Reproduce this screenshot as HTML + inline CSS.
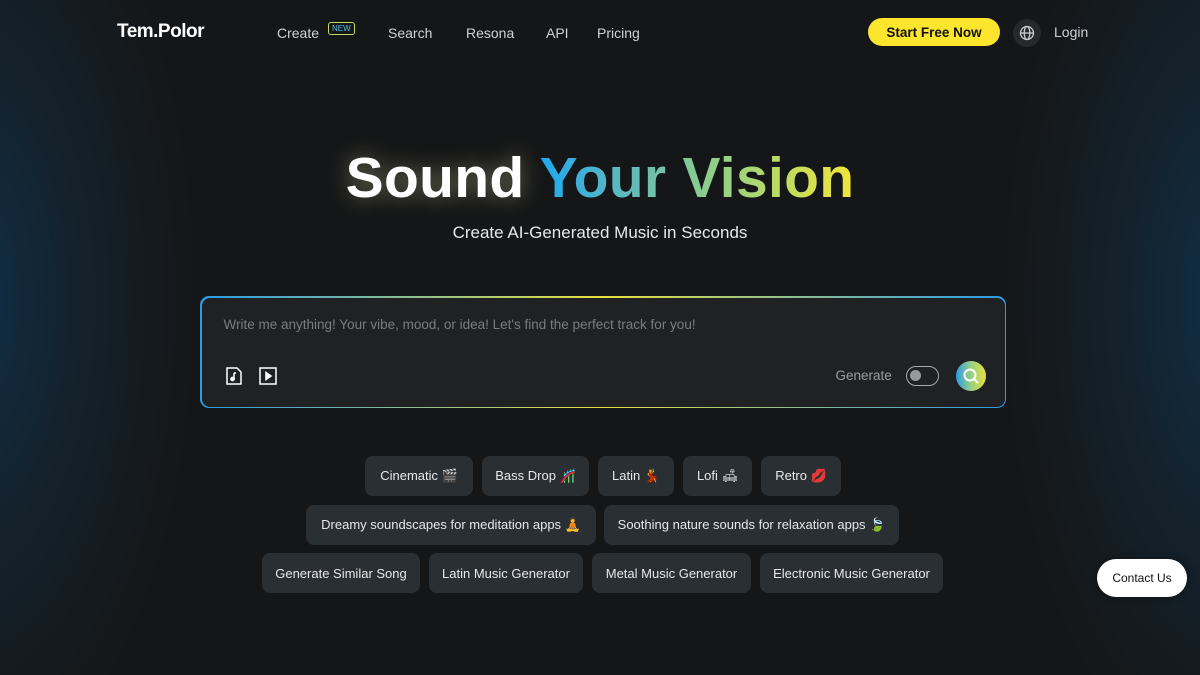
<!DOCTYPE html><html><head><style>
*{margin:0;padding:0;box-sizing:border-box}
body{width:1200px;height:675px;overflow:hidden;font-family:"Liberation Sans",sans-serif;color:#fff;
background:radial-gradient(ellipse 240px 500px at -40px 300px,#10304a 0%,rgba(18,50,74,.45) 45%,rgba(0,0,0,0) 100%),radial-gradient(ellipse 240px 500px at 1240px 300px,#10304a 0%,rgba(18,50,74,.45) 45%,rgba(0,0,0,0) 100%),#151617;position:relative}
.abs{position:absolute}
.nav{font-size:14px;color:#cfd2d4;top:25px}
.chip{position:absolute;height:40px;background:#2a2f33;border-radius:8px;font-size:13px;color:#e6e8ea;display:flex;align-items:center;justify-content:center}
</style></head><body>
<div class="abs" style="left:117px;top:21px;font-size:19px;font-weight:bold;letter-spacing:-0.5px">Tem.Polor</div>
<div class="abs nav" style="left:277px">Create</div>
<div class="abs" style="left:328px;top:22px;font-size:8px;color:#5ac0e8;border:1px solid #c8d86a;border-radius:3px;padding:1px 3px">NEW</div>
<div class="abs nav" style="left:388px">Search</div>
<div class="abs nav" style="left:466px">Resona</div>
<div class="abs nav" style="left:546px">API</div>
<div class="abs nav" style="left:597px">Pricing</div>
<div class="abs" style="left:868px;top:18px;width:132px;height:28px;border-radius:14px;background:#fbe52d;color:#111;font-size:13.5px;font-weight:bold;display:flex;align-items:center;justify-content:center">Start Free Now</div>
<div class="abs" style="left:1013px;top:19px;width:28px;height:28px;border-radius:50%;background:#26282a"><svg width="28" height="28" viewBox="0 0 28 28" fill="none" stroke="#ccc" stroke-width="1.3"><circle cx="14" cy="14" r="6.5"/><ellipse cx="14" cy="14" rx="2.8" ry="6.5"/><path d="M7.5 14h13"/></svg></div>
<div class="abs nav" style="left:1054px;top:24px">Login</div>
<div class="abs" style="left:0;width:1200px;top:145px;text-align:center;font-size:57px;font-weight:bold;letter-spacing:0.3px"><span style="color:#fff;text-shadow:0 0 22px rgba(230,230,170,.45)">Sound </span><span style="background:linear-gradient(90deg,#1ea8f0,#5cb8c0 25%,#8fcf8a 55%,#f1e63a);-webkit-background-clip:text;background-clip:text;color:transparent">Your Vision</span></div>
<div class="abs" style="left:0;width:1200px;top:223px;text-align:center;font-size:17px;color:#e8e8e8">Create AI-Generated Music in Seconds</div>
<div class="abs" style="left:200px;top:296px;width:806px;height:112px;border-radius:9px;padding:1.5px;background:linear-gradient(90deg,#2a9be8,#e8e040 50%,#2a9be8)">
<div style="width:100%;height:100%;border-radius:8px;background:#202122;position:relative">
<div class="abs" style="left:22px;top:19px;font-size:13.5px;color:#7a7c7e">Write me anything! Your vibe, mood, or idea! Let's find the perfect track for you!</div>
<svg class="abs" style="left:22px;top:68px" width="20" height="20" viewBox="0 0 20 20" fill="none" stroke="#fff" stroke-width="1.5"><path d="M3 2h10l4 4v12H3z"/><path d="M10 7v6" /><circle cx="8.5" cy="13" r="1.6" fill="#fff"/><path d="M10 7h2"/></svg>
<svg class="abs" style="left:56px;top:68px" width="20" height="20" viewBox="0 0 20 20" fill="none" stroke="#fff" stroke-width="1.5"><rect x="2" y="2" width="16" height="16"/><path d="M8 6.5l5 3.5-5 3.5z" fill="#fff"/></svg>
<div class="abs" style="left:634px;top:70px;font-size:13.5px;color:#9a9c9e">Generate</div>
<div class="abs" style="left:704px;top:68px;width:33px;height:20px;border-radius:10px;border:1.5px solid #aaa"><div style="position:absolute;left:3px;top:3px;width:11px;height:11px;border-radius:50%;background:#999"></div></div>
<div class="abs" style="left:754px;top:63px;width:30px;height:30px;border-radius:50%;background:linear-gradient(90deg,#2a9be8,#9ad080,#e8e040)"><svg width="30" height="30" viewBox="0 0 30 30" fill="none" stroke="#fff" stroke-width="2"><circle cx="14" cy="14" r="5.5"/><path d="M18 18l4 4"/></svg></div>
</div></div>
<div class="chip" style="left:365px;top:456px;width:108px">Cinematic 🎬</div>
<div class="chip" style="left:482px;top:456px;width:107px">Bass Drop 🎢</div>
<div class="chip" style="left:598px;top:456px;width:76px">Latin 💃</div>
<div class="chip" style="left:683px;top:456px;width:69px">Lofi 🛋</div>
<div class="chip" style="left:761px;top:456px;width:80px">Retro 💋</div>
<div class="chip" style="left:306px;top:505px;width:290px">Dreamy soundscapes for meditation apps 🧘</div>
<div class="chip" style="left:604px;top:505px;width:295px">Soothing nature sounds for relaxation apps 🍃</div>
<div class="chip" style="left:262px;top:553px;width:158px">Generate Similar Song</div>
<div class="chip" style="left:429px;top:553px;width:154px">Latin Music Generator</div>
<div class="chip" style="left:592px;top:553px;width:159px">Metal Music Generator</div>
<div class="chip" style="left:760px;top:553px;width:183px">Electronic Music Generator</div>
<div class="abs" style="left:1097px;top:559px;width:90px;height:38px;border-radius:19px;background:#fff;color:#111;font-size:12px;display:flex;align-items:center;justify-content:center;box-shadow:0 0 8px rgba(0,0,0,.4)">Contact Us</div>
</body></html>
